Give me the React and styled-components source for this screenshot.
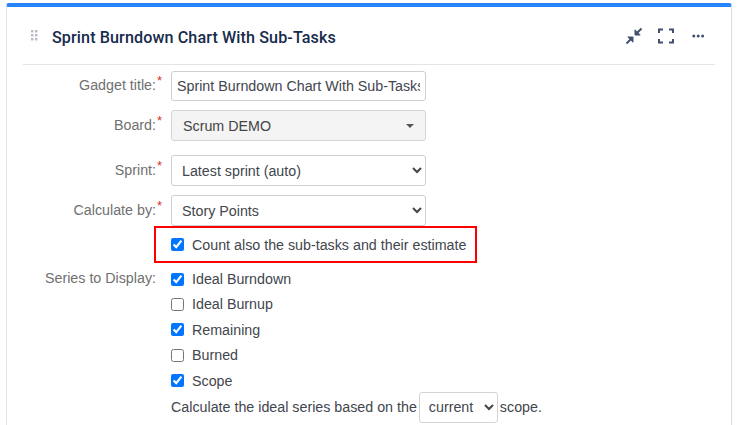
import React from "react";
import styled, { createGlobalStyle } from "styled-components";

const Global = createGlobalStyle`
  html, body { margin: 0; padding: 0; background: #fff; height: 425px; overflow: hidden; }
  * { box-sizing: border-box; }
`;

const Card = styled.div`
  margin-left: 6px;
  width: 726px;
  height: 425px;
  margin-top: 3px;
  border-top: 4px solid #2684ff;
  border-left: 1px solid #e4e4e4;
  border-right: 1px solid #dcdcdc;
  border-radius: 3px 3px 0 0;
  padding: 0 16px;
  font-family: "Liberation Sans", Arial, sans-serif;
  font-size: 14.27px;
  color: #42464d;
`;

const Header = styled.header`
  height: 58px;
  display: flex;
  align-items: center;
  border-bottom: 1px solid #e4e4e4;
  padding: 3px 0 0 8px;
  gap: 13px;
`;

const Grip = styled.svg`
  width: 8px;
  height: 12px;
  flex: none;
  margin-top: -3px;
`;

const Title = styled.h1`
  margin: 0;
  flex: 1;
  font-family: Roboto, "Noto Sans", sans-serif;
  font-size: 16.15px;
  font-weight: 500;
  color: #172b4d;
  letter-spacing: 0.1px;
`;

const Actions = styled.div`
  display: flex;
  align-items: center;
  gap: 14px;
  margin-right: 8px;
  margin-top: -3px;
  color: #42526e;
`;

const IconSvg = styled.svg`
  width: 18px;
  height: 18px;
  display: block;
`;

const Form = styled.div`
  display: grid;
  grid-template-columns: 133px 1fr;
  column-gap: 15px;
  padding-top: 6px;
`;

const Label = styled.label`
  justify-self: end;
  align-self: start;
  color: #707070;
  line-height: 16px;
  padding-top: ${(p) => p.$top ?? 5}px;
  position: relative;
  white-space: nowrap;
`;

const Star = styled.span`
  position: absolute;
  left: 100%;
  top: ${(p) => p.$top ?? 3}px;
  margin-left: 1px;
  color: #d9302c;
  font-size: 13px;
  line-height: 14px;
`;

const Cell = styled.div`
  margin-bottom: ${(p) => p.$mb ?? 9}px;
`;

const TextInput = styled.input`
  display: block;
  width: 255px;
  height: 30px;
  border: 1px solid #cfcfcf;
  border-radius: 3px;
  padding: 0 5px;
  font: 14.27px "Liberation Sans", Arial, sans-serif;
  color: #42464d;
  background: #fff;
  outline: none;
`;

const Select = styled.select`
  display: block;
  width: 255px;
  height: 31px;
  border: 1px solid #cfcfcf;
  border-radius: 3px;
  padding: 0 6px;
  font: 14.27px "Liberation Sans", Arial, sans-serif;
  color: #42464d;
  background: #fff;
`;

const FakeSelect = styled.div`
  width: 255px;
  height: 31px;
  border: 1px solid #d4d4d4;
  border-radius: 3px;
  background: #f4f4f4;
  display: flex;
  align-items: center;
  justify-content: space-between;
  padding: 0 11px;
  color: #444;
`;

const Caret = styled.span`
  width: 0;
  height: 0;
  border-left: 4px solid transparent;
  border-right: 4px solid transparent;
  border-top: 4px solid #555;
`;

const Highlight = styled.div`
  position: relative;
  height: 37px;
  display: flex;
  align-items: center;
`;

const RedBox = styled.div`
  position: absolute;
  left: -17px;
  top: 0;
  width: 323px;
  height: 37px;
  border: 2px solid #ff0000;
  pointer-events: none;
`;

const CheckRow = styled.label`
  display: flex;
  align-items: center;
  gap: 8px;
  height: ${(p) => p.$h ?? 25.4}px;
  color: #42464d;
`;

const Check = styled.input.attrs({ type: "checkbox" })`
  width: 13px;
  height: 13px;
  margin: 0;
  flex: none;
  accent-color: #0075ff;
`;

const SeriesList = styled.div`
  margin-top: 3.4px;
`;

const InlineRow = styled.div`
  display: flex;
  align-items: center;
  gap: 2px;
  height: 28px;
`;

const SmallSelect = styled.select`
  width: 79px;
  height: 31px;
  border: 1px solid #d4d4d4;
  border-radius: 3px;
  padding: 0 5px;
  font: 14.27px "Liberation Sans", Arial, sans-serif;
  color: #42464d;
  background: #fff;
`;

export default function App() {
  return (
    <>
      <Global />
      <Card>
        <Header>
          <Grip viewBox="0 0 8 12">
            {[1, 5].flatMap((x) =>
              [1, 5, 9].map((y) => <rect key={`${x}${y}`} x={x - 1} y={y - 1} width="2.4" height="2.4" fill="#b5bac4" />)
            )}
          </Grip>
          <Title>Sprint Burndown Chart With Sub-Tasks</Title>
          <Actions>
            <IconSvg viewBox="0 0 18 18" fill="none" stroke="currentColor" strokeWidth="2">
              <path d="M1.5 16.5 7 11" />
              <path d="M2.8 10h5.2v5.2z" fill="currentColor" strokeWidth="1" />
              <path d="M11 7 16.5 1.5" />
              <path d="M10 2.8v5.2h5.2z" fill="currentColor" strokeWidth="1" />
            </IconSvg>
            <IconSvg viewBox="0 0 18 18" fill="none" stroke="currentColor" strokeWidth="2">
              <path d="M2 6V2.5h4M12 2.5h4V6M16 12v3.5h-4M6 15.5H2V12" />
            </IconSvg>
            <IconSvg viewBox="0 0 18 18" fill="currentColor">
              <circle cx="4.8" cy="9" r="1.5" />
              <circle cx="9.2" cy="9" r="1.5" />
              <circle cx="13.6" cy="9" r="1.5" />
            </IconSvg>
          </Actions>
        </Header>
        <Form>
          <Label $top={6}>Gadget title:<Star>*</Star></Label>
          <Cell>
            <TextInput readOnly value="Sprint Burndown Chart With Sub-Tasks" />
          </Cell>
          <Label $top={7}>Board:<Star $top={4}>*</Star></Label>
          <Cell $mb={14}>
            <FakeSelect>
              Scrum DEMO
              <Caret />
            </FakeSelect>
          </Cell>
          <Label $top={7}>Sprint:<Star $top={4}>*</Star></Label>
          <Cell $mb={9}>
            <Select defaultValue="a">
              <option value="a">Latest sprint (auto)</option>
            </Select>
          </Cell>
          <Label $top={7}>Calculate by:<Star $top={4}>*</Star></Label>
          <Cell $mb={0}>
            <Select defaultValue="a">
              <option value="a">Story Points</option>
            </Select>
          </Cell>
          <span />
          <Highlight>
            <CheckRow $h={37}>
              <Check defaultChecked />
              Count also the sub-tasks and their estimate
            </CheckRow>
            <RedBox />
          </Highlight>
          <Label $top={7}>Series to Display:</Label>
          <SeriesList>
            <CheckRow><Check defaultChecked />Ideal Burndown</CheckRow>
            <CheckRow><Check />Ideal Burnup</CheckRow>
            <CheckRow><Check defaultChecked />Remaining</CheckRow>
            <CheckRow><Check />Burned</CheckRow>
            <CheckRow><Check defaultChecked />Scope</CheckRow>
            <InlineRow>
              Calculate the ideal series based on the
              <SmallSelect defaultValue="current">
                <option value="current">current</option>
              </SmallSelect>
              scope.
            </InlineRow>
          </SeriesList>
        </Form>
      </Card>
    </>
  );
}
